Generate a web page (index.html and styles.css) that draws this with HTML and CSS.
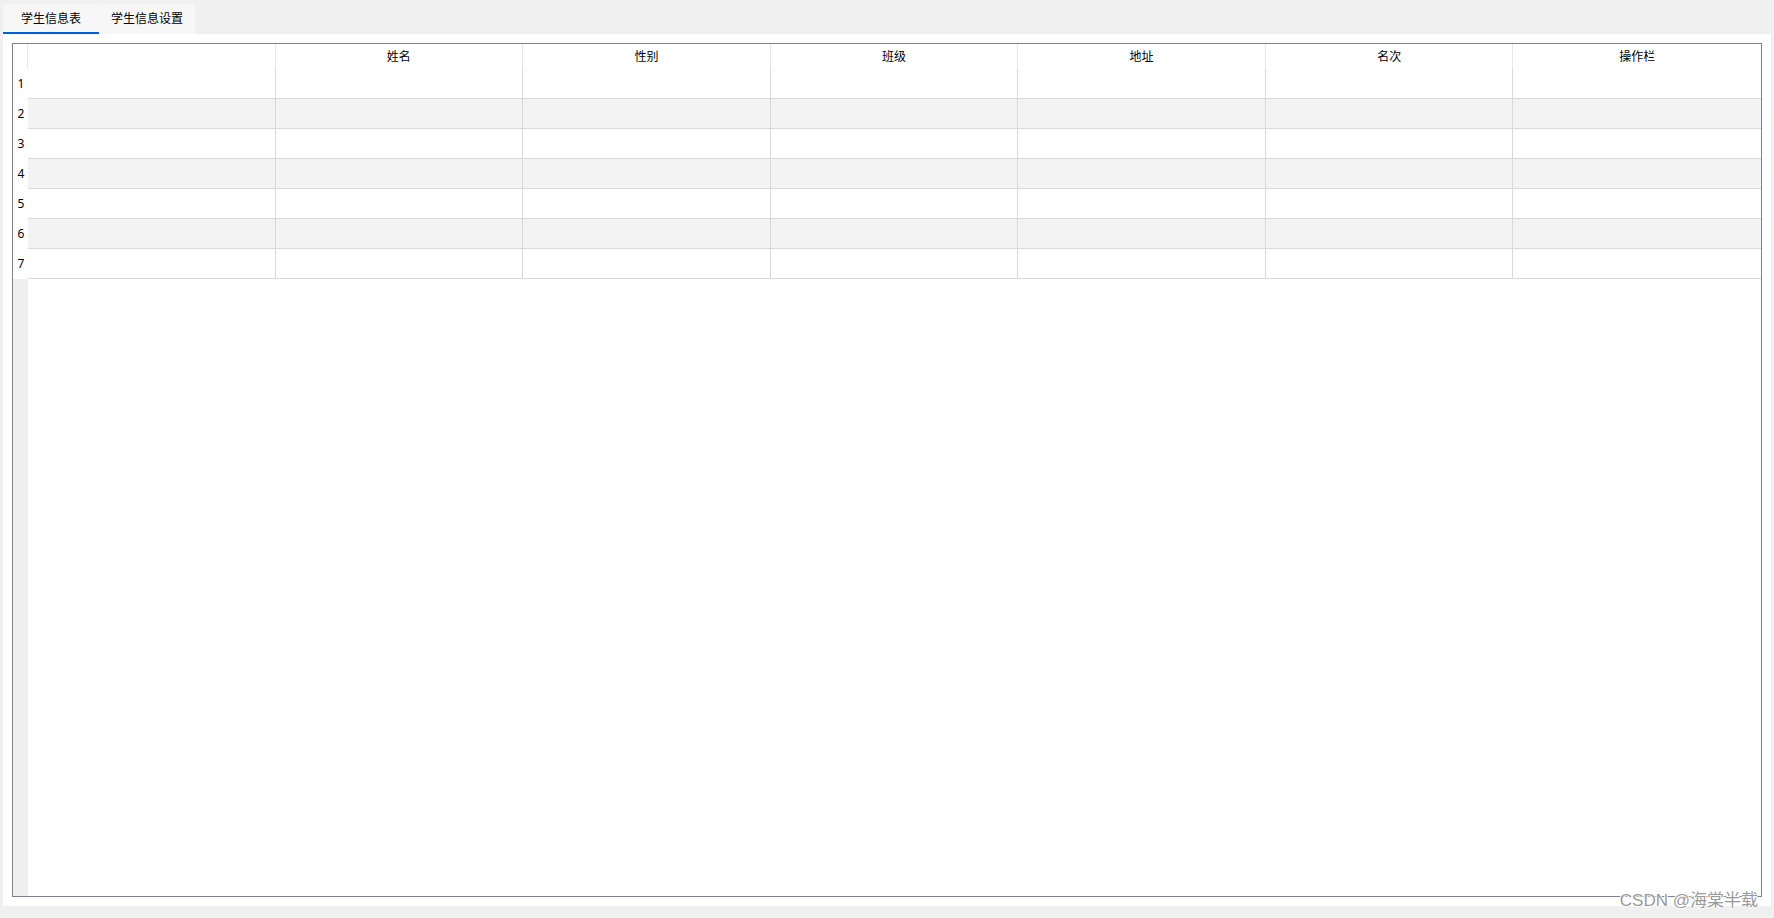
FILE: index.html
```html
<!DOCTYPE html>
<html lang="zh-CN">
<head>
  <meta charset="UTF-8">
  <title>学生信息表</title>
  <link rel="stylesheet" href="styles.css">
</head>
<body>
  <div class="tabs">
    <div class="tab active">学生信息表</div>
    <div class="tab">学生信息设置</div>
  </div>

  <div class="panel">
    <div class="table">
      <div class="row head">
        <div class="rh"></div>
        <div class="hc"></div>
        <div class="hc">姓名</div>
        <div class="hc">性别</div>
        <div class="hc">班级</div>
        <div class="hc">地址</div>
        <div class="hc">名次</div>
        <div class="hc last">操作栏</div>
      </div>
      <div id="rows"></div>
      <div class="filler">
        <div class="rh-fill"></div>
        <div></div>
      </div>
    </div>
  </div>

  <div class="watermark">CSDN @海棠半载</div>

  <script>
    var rows = document.getElementById("rows");
    for (var i = 1; i <= 7; i++) {
      var html = '<div class="row' + (i % 2 === 0 ? ' alt' : '') + '">';
      html += '<div class="rh">' + i + '</div>';
      for (var c = 0; c < 7; c++) {
        html += '<div class="cell' + (c === 6 ? ' last' : '') + '"></div>';
      }
      html += '</div>';
      rows.innerHTML += html;
    }
  </script>
</body>
</html>
```

FILE: styles.css
```css
body {
  margin: 0;
  height: 918px;
  background: #f0f0f0;
  font-family: "Noto Sans CJK SC", "Noto Sans", sans-serif;
  font-size: 12px;
  color: #000;
  overflow: hidden;
  position: relative;
}
.tabs {
  display: flex;
  padding: 4px 3px 0;
  height: 30px;
}
.tab {
  width: 96px;
  height: 30px;
  line-height: 28px;
  text-align: center;
  background: #f7f7f7;
  border-radius: 4px 4px 0 0;
  box-sizing: border-box;
}
.tab.active {
  box-shadow: inset 0 -2px 0 #005fe0;
}
.panel {
  margin: 0 3px;
  height: 872px;
  background: #fff;
  padding: 9px;
  box-sizing: border-box;
}
.table {
  height: 100%;
  border: 1px solid #808088;
  box-sizing: border-box;
  display: flex;
  flex-direction: column;
}
.row {
  display: grid;
  grid-template-columns: 15px repeat(7, 1fr);
  height: 30px;
}
.row.head {
  height: 25px;
}
.rh {
  font-family: "Noto Sans", "Liberation Sans", sans-serif;
  font-size: 12px;
  text-align: center;
  line-height: 30px;
  padding-left: 1px;
}
.row.head .rh {
  border-right: 1px solid #e8e8e8;
  box-sizing: border-box;
}
.hc {
  text-align: center;
  padding-top: 5px;
  line-height: 14px;
  border-right: 1px solid #e8e8e8;
}
.hc.last,
.cell.last {
  border-right: none;
}
.cell {
  border-right: 1px solid #d9d9d9;
  border-bottom: 1px solid #d9d9d9;
}
.row.alt .cell {
  background: #f3f3f3;
}
.filler {
  flex: 1;
  display: grid;
  grid-template-columns: 15px 1fr;
}
.rh-fill {
  background: #efefef;
}
.watermark {
  position: absolute;
  right: 16px;
  top: 886px;
  font-family: "Liberation Sans", "Noto Sans CJK SC", sans-serif;
  font-size: 17px;
  color: #9a9a9a;
  text-shadow: 1px 0 #fff, -1px 0 #fff, 0 1px #fff, 0 -1px #fff;
}
```
